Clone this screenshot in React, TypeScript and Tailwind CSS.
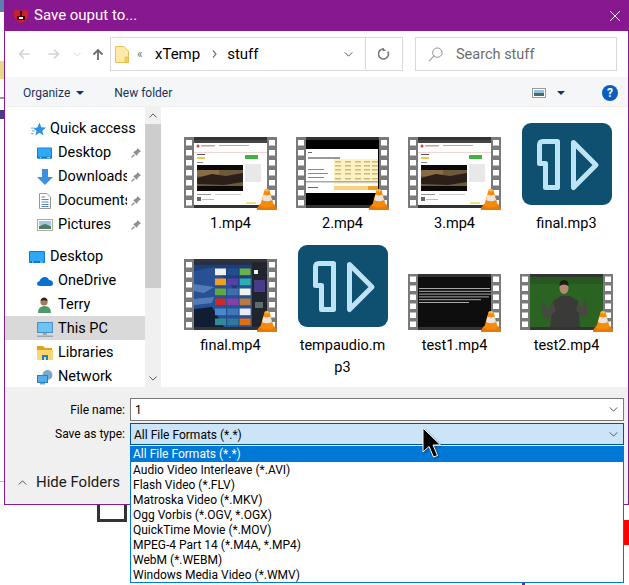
import { ReactNode } from "react";

const listItems = [
  "Audio Video Interleave (*.AVI)",
  "Flash Video (*.FLV)",
  "Matroska Video (*.MKV)",
  "Ogg Vorbis (*.OGV, *.OGX)",
  "QuickTime Movie (*.MOV)",
  "MPEG-4 Part 14 (*.M4A, *.MP4)",
  "WebM (*.WEBM)",
  "Windows Media Video (*.WMV)",
];

function Cone() {
  return (
    <svg viewBox="0 0 20 23" className="absolute right-0 bottom-[-3px] h-[23px] w-[20px]">
      <path d="M0 20 L3 16 H17 L20 20 V22 H0 Z" fill="#e87a00" />
      <path d="M7.5 2 Q10 0 12.5 2 L17 18 Q10 21 3 18 Z" fill="#f58a0b" />
      <path d="M6.5 6.5 Q10 8.5 13.5 6.5 L15 12 Q10 14.5 5 12 Z" fill="#e9e4dc" />
      <path d="M8 1.5 Q10 0.5 12 1.5 L12.5 3 Q10 4 7.5 3 Z" fill="#ffb347" />
    </svg>
  );
}

function WebPage() {
  return (
    <g>
      <rect x="10" y="3" width="73" height="65" fill="#fff" />
      <rect x="10" y="3" width="73" height="3" fill="#444" />
      <circle cx="14" cy="9" r="1.5" fill="#d23b3b" />
      <rect x="17" y="8" width="14" height="1.5" fill="#c9a0a0" />
      <rect x="35" y="8" width="30" height="1" fill="#aaa" />
      <rect x="10" y="15" width="73" height="1" fill="#f2d6d6" />
      <rect x="13" y="17" width="8" height="1" fill="#555" />
      <rect x="13" y="20" width="8" height="2" fill="#f2c744" />
      <rect x="13" y="25" width="6" height="1" fill="#888" />
      <rect x="61" y="18" width="13" height="4" fill="#3fb53f" />
      <rect x="61" y="27" width="16" height="18" fill="#e8e8e8" />
      <rect x="13" y="28" width="46" height="26" fill="#0c0a08" />
      <rect x="13" y="33" width="46" height="16" fill="#6b5a3a" />
      <rect x="13" y="33" width="22" height="6" fill="#8a6a42" />
      <path d="M13 41 L28 37 L42 39 L59 36 V45 L40 48 L13 47 Z" fill="#2a2019" />
      <rect x="13" y="57" width="14" height="1" fill="#999" />
      <rect x="31" y="57" width="26" height="1" fill="#ccc" />
      <rect x="13" y="60" width="4" height="4" fill="#666" />
      <rect x="18" y="62" width="12" height="1" fill="#bbb" />
      <rect x="62" y="65" width="10" height="2" fill="#f2e28a" />
    </g>
  );
}

function TableShot() {
  const cols = [39, 49, 59, 68, 76];
  const rows = [24, 28, 32, 36, 41];
  return (
    <g>
      <rect x="10" y="3" width="73" height="65" fill="#000" />
      <rect x="10" y="12" width="72" height="44" fill="#fff" />
      <rect x="12" y="20" width="32" height="2" fill="#999" />
      <rect x="12" y="15" width="4" height="1" fill="#666" />
      <rect x="38" y="22" width="44" height="25" fill="#fdf2c0" />
      {cols.map((x) => rows.map((y) => <rect key={`${x}-${y}`} x={x} y={y} width="6" height="1.5" fill="#c8b98a" />))}
      <rect x="12" y="32" width="16" height="1" fill="#888" />
      <rect x="12" y="36" width="20" height="1" fill="#888" />
      <rect x="12" y="40" width="16" height="1" fill="#888" />
      <rect x="10" y="44" width="72" height="1.5" fill="#aaa" />
      <rect x="38" y="49" width="44" height="4" fill="#fbd27b" />
      <rect x="72" y="49" width="10" height="4" fill="#f09a22" />
      <rect x="12" y="50" width="10" height="1" fill="#666" />
    </g>
  );
}

function TilesShot() {
  const tiles = [
    ["#f0f0f0", "#1f4f8f", "#6bb04a"],
    ["#f0a020", "#5b3ea8", "#2fb0b0"],
    ["#63a83f", "#3f6fa8", "#f2f2e6"],
    ["#d02828", "#8a3fa8", "#b87a3f"],
    ["#4a88cc", "#3f78b8", "#e8eef2"],
    ["#2f8a9a", "#2f7a9a", "#e07010"],
  ];
  return (
    <g>
      <rect x="10" y="3" width="73" height="65" fill="#1c3f78" />
      <rect x="10" y="3" width="58" height="3" fill="#24304a" />
      <path d="M10 12 L30 8 L50 30 L68 18 V68 H10 Z" fill="#2c5aa0" opacity="0.7" />
      <path d="M10 25 L30 28 L20 34 L10 32 Z M10 40 L30 38 L28 44 L10 46 Z" fill="#6f9ad0" opacity="0.6" />
      <path d="M10 50 L28 48 L40 68 H10 Z" fill="#111d33" />
      <rect x="68" y="3" width="15" height="65" fill="#20242c" />
      <rect x="70" y="21" width="11" height="12" fill="#4a3a8a" />
      <rect x="70" y="11" width="4" height="4" fill="#eee" />
      <rect x="71" y="43" width="8" height="6" fill="#5a6f6a" />
      {tiles.map((row, i) =>
        row.map((c, j) => <rect key={`${i}-${j}`} x={31 + j * 12.3} y={9.5 + i * 10} width="11" height="6.7" fill={c} />),
      )}
    </g>
  );
}

function TextShot() {
  const lines = [71, 72, 72, 70, 62, 50];
  return (
    <g>
      <rect x="10" y="3" width="73" height="50" fill="#0e0e0e" />
      {lines.map((w, i) => (
        <rect key={i} x="11" y={14 + i * 2.8} width={w} height="1" fill="#a8a8a8" />
      ))}
    </g>
  );
}

function PersonShot() {
  return (
    <g>
      <rect x="10" y="3" width="73" height="50" fill="#2b6322" />
      <rect x="10" y="3" width="73" height="7" fill="#1f4f1c" opacity="0.5" />
      <path d="M30 53 L33 27 L41 22 H50 L58 27 L60 53 Z" fill="#3a3a38" />
      <path d="M33 28 L26 38 L25 29 L22 28 L23 42 L28 45 L36 36 Z" fill="#4a4643" />
      <path d="M58 28 L62 36 L63 25 L66 27 L68 40 L62 43 L56 36 Z" fill="#4a4643" />
      <ellipse cx="44" cy="14" rx="4.5" ry="6" fill="#b08a72" />
      <path d="M39.5 12 Q39 6 44 6 Q49 6 48.5 12 Q44 9 39.5 12 Z" fill="#1e1a18" />
    </g>
  );
}

function VideoThumb({ children, short }: { children: ReactNode; short?: boolean }) {
  const h = short ? 56 : 71;
  const holes = short ? [2.5, 11.5, 20.5, 29.5, 38.5, 47.5] : [3, 13, 23, 33, 43, 53, 63];
  return (
    <div className={`relative w-[93px] ${short ? "h-[56px]" : "h-[71px]"}`}>
      <svg viewBox={`0 0 93 ${h}`} className={`w-[93px] ${short ? "h-[56px]" : "h-[71px]"}`}>
        <rect width="93" height={h} fill="#7a7a7a" />
        <rect x="10" width="73" height={h} fill="#333" />
        {holes.map((y) => (
          <g key={y}>
            <rect x="2" y={y} width="6" height="5.5" fill="#fff" />
            <rect x="85" y={y} width="6" height="5.5" fill="#fff" />
          </g>
        ))}
        {children}
      </svg>
      <Cone />
    </div>
  );
}

function AudioThumb() {
  return (
    <svg viewBox="0 0 90 82" className="mb-[3px] ml-px h-[82px] w-[90px]">
      <rect width="90" height="82" rx="9" fill="#0f4f70" />
      <path
        d="M21 18.5 H35.5 V64.5 H23.5 V40.5 H17.5 V22 Q17.5 18.5 21 18.5 Z"
        fill="none"
        stroke="#bee3f4"
        strokeWidth="5"
        strokeLinejoin="round"
      />
      <path d="M51.5 19.5 L74 42 L51.5 64.5 Z" fill="none" stroke="#bee3f4" strokeWidth="5" strokeLinejoin="round" />
    </svg>
  );
}

function FileItem({ name, children }: { name: string; children: ReactNode }) {
  return (
    <div className="flex h-[122px] w-[112px] flex-col items-center">
      <div className="flex h-[93px] shrink-0 items-end justify-center">{children}</div>
      <div className="ml-px w-[92px] pt-[5px] text-center text-[14.5px] leading-[22px] break-all text-black">{name}</div>
    </div>
  );
}

function Pin() {
  return (
    <svg viewBox="0 0 10 10" className="h-[10px] w-[10px]">
      <path d="M6.5 0 L10 3.5 L8.5 4 L6.5 6.5 L6 8 L2 4 L3.5 3.5 L6 1.5 Z" fill="#8f8f8f" />
      <path d="M3.5 6.5 L0.5 9.5" stroke="#8f8f8f" strokeWidth="1.2" />
    </svg>
  );
}

function DesktopIcon({ w = 15 }: { w?: number }) {
  return (
    <svg viewBox="0 0 16 12" width={w} height={12}>
      <rect width="16" height="12" rx="1" fill="#0a78d4" />
      <rect x="1" y="1" width="14" height="9" fill="#30a8f5" />
      <rect x="3" y="10.5" width="1.5" height="1" fill="#bfe3f5" />
      <rect x="11" y="10.5" width="3" height="1" fill="#bfe3f5" />
    </svg>
  );
}

function NavRow({ icon, label, pin, pad = 32, active }: { icon: ReactNode; label: string; pin?: boolean; pad?: number; active?: boolean }) {
  return (
    <div
      className={`flex h-6 items-center pt-[2px] ${active ? "bg-[#d9d9d9]" : ""} ${pad === 24 ? "pl-6" : "pl-8"}`}
    >
      <div className="flex h-4 w-[21px] shrink-0 items-center">{icon}</div>
      <span className={`overflow-hidden text-[14.5px] whitespace-nowrap text-black ${pin ? "w-[69px]" : ""}`}>{label}</span>
      {pin && (
        <span className="ml-[4px] flex">
          <Pin />
        </span>
      )}
    </div>
  );
}

function Chevron({ className }: { className?: string }) {
  return (
    <svg viewBox="0 0 10 6" className={className}>
      <path d="M0.5 0.5 L5 5 L9.5 0.5" fill="none" stroke="#555" strokeWidth="1.2" />
    </svg>
  );
}

function Arrow({ flip, color }: { flip?: boolean; color: string }) {
  return (
    <svg viewBox="0 0 12 12" className={`h-3 w-3 ${flip ? "rotate-180" : ""}`}>
      <path d="M11.5 6 H1.5 M6 1.5 L1.5 6 L6 10.5" fill="none" stroke={color} strokeWidth="1.6" />
    </svg>
  );
}

export default function App() {
  return (
    <div
      className="relative h-[585px] w-[629px] overflow-hidden bg-white"
      style={{ fontFamily: 'Roboto, "Noto Sans", sans-serif' }}
    >
      {/* scraps of the windows behind the dialog */}
      <div className="absolute top-0 left-0 h-[12px] w-[4px] bg-[#5a7fb0]" />
      <div className="absolute top-[61px] left-0 h-[18px] w-[4px] bg-[#e8d88a]" />
      <div className="absolute top-[97px] left-0 h-[2px] w-[4px] bg-[#9a9a9a]" />
      <div className="absolute top-[110px] left-0 h-[9px] w-[4px] bg-[#4a3a90]" />
      <div className="absolute top-[481px] left-0 h-[1px] w-[4px] bg-[#bbb]" />
      <div className="absolute top-[504px] left-[97px] h-[18px] w-[30px] border-x-[3px] border-b-[3px] border-[#333]" />
      <div className="absolute top-[520px] left-[624px] h-[25px] w-[5px] bg-[#f00]" />
      <div className="absolute top-[581px] left-[522px] h-[4px] w-[3px] bg-[#8a1a90]" />

      <div className="relative ml-[4px] flex h-[505px] w-[625px] flex-col border-x border-b border-[#8a1a90] bg-white">
        {/* title bar */}
        <div className="-mx-px flex h-[31px] shrink-0 items-center bg-[#881890] pr-[9px] pl-[9px] text-white">
          <svg viewBox="0 0 16 16" className="h-4 w-4 shrink-0">
            <path d="M1 3 Q4 1 8 3 Q12 1 15 3 V9 Q12 14 8 15 Q4 14 1 9 Z" fill="#c9202a" />
            <path d="M7 3 H9 V8 H12 V12 H4 V8 H7 Z" fill="#3a0a10" />
            <rect x="6" y="9" width="4" height="2" fill="#eee" />
          </svg>
          <span className="ml-[5px] text-[15px]">Save ouput to...</span>
          <svg viewBox="0 0 10 10" className="ml-auto h-[10px] w-[10px]">
            <path d="M0 0 L10 10 M10 0 L0 10" stroke="#fff" strokeWidth="1" />
          </svg>
        </div>

        {/* address bar */}
        <div className="flex h-[46px] shrink-0 items-center">
          <div className="ml-[13px] flex w-[93px] items-center">
            <Arrow color="#d4d4d4" />
            <span className="ml-[18px]">
              <Arrow flip color="#d4d4d4" />
            </span>
            <Chevron className="ml-[14px] h-[5px] w-[7px] opacity-30" />
            <svg viewBox="0 0 12 12" className="ml-[11px] h-3 w-3">
              <path d="M6 12 V2 M1.5 6.5 L6 2 L10.5 6.5" fill="none" stroke="#6d6d6d" strokeWidth="1.8" />
            </svg>
          </div>
          <div className="ml-[-1px] flex h-[34px] w-[293px] items-center border border-[#d9d9d9] pl-[4px]">
            <svg viewBox="0 0 14 17" className="h-[17px] w-[14px] shrink-0">
              <path d="M0.5 0.5 H9 L13.5 5 V16.5 H0.5 Z" fill="#fde9a8" stroke="#e6c35c" />
              <rect x="10" y="11" width="3.5" height="5.5" fill="#f6cf58" stroke="#d8b045" strokeWidth="0.5" />
            </svg>
            <span className="ml-[8px] w-[10px] text-[12px] leading-none text-[#777]">«</span>
            <span className="ml-[8px] text-[15px] text-black">xTemp</span>
            <svg viewBox="0 0 5 8" className="ml-[12px] h-[8px] w-[5px]">
              <path d="M1 0.5 L4 4 L1 7.5" fill="none" stroke="#777" strokeWidth="1.2" />
            </svg>
            <span className="ml-[10px] text-[15px] text-black">stuff</span>
            <Chevron className="mr-[12px] ml-auto h-[5px] w-[9px]" />
            <div className="flex h-full w-[37px] items-center justify-center border-l border-[#d9d9d9]">
              <svg viewBox="0 0 12 12" className="h-[12px] w-[12px]">
                <path d="M9.8 3.5 A5 5 0 1 1 6 1" fill="none" stroke="#777" strokeWidth="1.6" />
                <path d="M4.5 0 V3.5 H8 Z" fill="#777" transform="translate(0 -0.5)" />
              </svg>
            </div>
          </div>
          <div className="ml-[12px] flex h-[34px] w-[202px] items-center border border-[#d9d9d9] pl-[12px]">
            <svg viewBox="0 0 16 16" className="h-[15px] w-[15px]">
              <circle cx="10" cy="6" r="5" fill="none" stroke="#8a8a8a" strokeWidth="1" />
              <path d="M6.5 9.5 L1 15" stroke="#b59a6a" strokeWidth="1.2" />
            </svg>
            <span className="ml-[13px] pt-[2px] text-[14.5px] text-[#6d6d6d]">Search stuff</span>
          </div>
        </div>

        {/* toolbar */}
        <div className="flex h-[30px] shrink-0 items-center border-b border-[#f0f0f0] bg-[#f5f6f7] pt-[2px] pl-[18px] text-[12px] text-[#1a3358]">
          <span>Organize</span>
          <span className="ml-[6px] h-0 w-0 border-x-[4px] border-t-[4px] border-x-transparent border-t-[#1a3358]" />
          <span className="ml-[30px]">New folder</span>
          <svg viewBox="0 0 14 10" className="ml-auto h-[10px] w-[14px]">
            <rect x="0.5" y="0.5" width="13" height="9" fill="#fff" stroke="#999" />
            <rect x="2" y="2" width="10" height="3" fill="#8fc0e8" />
            <rect x="2" y="5" width="10" height="3" fill="#4d6b5a" />
          </svg>
          <span className="ml-[11px] h-0 w-0 border-x-[4px] border-t-[4px] border-x-transparent border-t-[#1a3358]" />
          <span className="mr-[10px] ml-[37px] flex h-4 w-4 items-center justify-center rounded-full bg-[#0a5ebd] text-[12px] font-bold text-white">
            ?
          </span>
        </div>

        {/* main */}
        <div className="flex min-h-0 flex-1">
          <div className="w-[140px] shrink-0 overflow-hidden pt-[9px]">
            <NavRow
              pad={24}
              label="Quick access"
              icon={
                <svg viewBox="0 0 16 14" className="ml-[2px] h-[14px] w-[15px]">
                  <path d="M9 0 L11 5 L16 5.5 L12 9 L13.5 14 L9 11 L4.5 14 L6 9 L3 6.5 L7 5 Z" fill="#2f8fe0" />
                  <path d="M0 6 H4 M1 9 H4 M0 12 H3" stroke="#2f8fe0" strokeWidth="0.8" />
                </svg>
              }
            />
            <NavRow pin label="Desktop" icon={<DesktopIcon />} />
            <NavRow
              pin
              label="Downloads"
              icon={
                <svg viewBox="0 0 16 16" className="h-4 w-4">
                  <path d="M5 0 H11 V8 H16 L8 16 L0 8 H5 Z" fill="#3d8fe0" />
                </svg>
              }
            />
            <NavRow
              pin
              label="Documents"
              icon={
                <svg viewBox="0 0 12 16" className="ml-[2px] h-4 w-3">
                  <path d="M0.5 0.5 H8 L11.5 4 V15.5 H0.5 Z" fill="#fff" stroke="#999" />
                  <path d="M2.5 4 H6 M2.5 6.5 H9.5 M2.5 9 H9.5 M2.5 11.5 H9.5 M2.5 13.5 H9.5" stroke="#5a88b8" />
                </svg>
              }
            />
            <NavRow
              pin
              label="Pictures"
              icon={
                <svg viewBox="0 0 16 12" className="h-3 w-4">
                  <rect x="0.5" y="0.5" width="15" height="11" fill="#fff" stroke="#aaa" />
                  <rect x="2" y="2" width="12" height="4" fill="#9cc8ee" />
                  <path d="M2 7 L8 5 L14 7 V10 H2 Z" fill="#4f7a60" />
                </svg>
              }
            />
            <div className="h-2" />
            <NavRow pad={24} label="Desktop" icon={<DesktopIcon w={16} />} />
            <NavRow
              label="OneDrive"
              icon={
                <svg viewBox="0 0 16 10" className="h-[10px] w-4">
                  <path d="M3 10 Q0 10 0 7.5 Q0 5.5 2.5 5 Q4 1 8 1 Q11 1 12 4 Q16 4 16 7.5 Q16 10 13 10 Z" fill="#0a6fcf" />
                </svg>
              }
            />
            <NavRow
              label="Terry"
              icon={
                <svg viewBox="0 0 13 16" className="ml-[1px] h-4 w-[13px]">
                  <path d="M0 16 Q0 9 6.5 9 Q13 9 13 16 Z" fill="#4f9a6a" />
                  <circle cx="6" cy="5" r="3.6" fill="#a87a5a" />
                  <path d="M2.5 4 Q3 0.5 6.5 0.5 Q9.5 1 9.5 4 Q6 2.5 2.5 4 Z" fill="#2a2320" />
                </svg>
              }
            />
            <NavRow
              active
              label="This PC"
              icon={
                <svg viewBox="0 0 16 15" className="h-[15px] w-4">
                  <rect x="0.5" y="0.5" width="15" height="10" fill="#6ec3f0" stroke="#4a90c8" />
                  <rect x="6" y="11" width="4" height="2" fill="#9aa8b5" />
                  <rect x="0" y="13.5" width="16" height="1.5" fill="#9aa8b5" />
                </svg>
              }
            />
            <NavRow
              label="Libraries"
              icon={
                <svg viewBox="0 0 16 14" className="h-[14px] w-4">
                  <path d="M0 0 H6 L8 2 H15 V5 H0 Z" fill="#e0a020" />
                  <rect y="4" width="16" height="10" fill="#fbd774" />
                  <path d="M5 14 V9 H11 V14 H9 V11 H7 V14 Z" fill="#1f7fd0" />
                </svg>
              }
            />
            <NavRow
              label="Network"
              icon={
                <svg viewBox="0 0 16 15" className="h-[15px] w-4">
                  <circle cx="10.5" cy="5" r="5" fill="#7aa8c8" />
                  <rect x="0.5" y="5.5" width="10" height="7" fill="#52aef0" stroke="#2a80c0" />
                  <rect x="3" y="13" width="5" height="1.5" fill="#8aa0b0" />
                </svg>
              }
            />
          </div>

          {/* scrollbar */}
          <div className="flex w-[16px] shrink-0 flex-col items-center bg-[#f0f0f0]">
            <div className="flex h-[17px] items-center">
              <Chevron className="h-[5px] w-[8px] rotate-180" />
            </div>
            <div className="h-[164px] w-full bg-[#cdcdcd]" />
            <div className="mt-auto flex h-[17px] items-center">
              <Chevron className="h-[5px] w-[8px]" />
            </div>
          </div>

          {/* files */}
          <div className="flex min-w-0 flex-1 flex-wrap content-start pt-[8px] pl-[13px]">
            <FileItem name="1.mp4">
              <VideoThumb>
                <WebPage />
              </VideoThumb>
            </FileItem>
            <FileItem name="2.mp4">
              <VideoThumb>
                <TableShot />
              </VideoThumb>
            </FileItem>
            <FileItem name="3.mp4">
              <VideoThumb>
                <WebPage />
              </VideoThumb>
            </FileItem>
            <FileItem name="final.mp3">
              <AudioThumb />
            </FileItem>
            <FileItem name="final.mp4">
              <VideoThumb>
                <TilesShot />
              </VideoThumb>
            </FileItem>
            <FileItem name="tempaudio.mp3">
              <AudioThumb />
            </FileItem>
            <FileItem name="test1.mp4">
              <VideoThumb short>
                <TextShot />
              </VideoThumb>
            </FileItem>
            <FileItem name="test2.mp4">
              <VideoThumb short>
                <PersonShot />
              </VideoThumb>
            </FileItem>
          </div>
        </div>

        {/* bottom panel */}
        <div className="relative h-[117px] shrink-0 bg-[#f0f0f0] text-[12px] text-black">
          <div className="flex items-center pt-[11px]">
            <span className="w-[120px] text-right">File name:</span>
            <div className="ml-[5px] flex h-[23px] w-[494px] items-center border border-[#7a7a7a] bg-white px-[4px]">
              1
              <Chevron className="mr-[1px] ml-auto h-[5px] w-[9px]" />
            </div>
          </div>
          <div className="mt-[2px] flex items-center">
            <span className="w-[120px] text-right">Save as type:</span>
            <div className="ml-[5px] flex h-[22px] w-[494px] items-center border border-[#005499] bg-[#cce4f7] px-[3px] pt-px">
              All File Formats (*.*)
              <Chevron className="mr-[2px] ml-auto h-[5px] w-[9px]" />
            </div>
          </div>
          <div className="mt-[26px] flex items-center pl-[13px]">
            <Chevron className="h-[5px] w-[9px] rotate-180" />
            <span className="ml-[9px] text-[15px] text-[#1a1a1a]">Hide Folders</span>
          </div>
        </div>
      </div>

      {/* open dropdown */}
      <div className="absolute top-[446px] left-[130px] h-[137px] w-[494px] border-x border-b border-[#0078d7] bg-white text-[12px] text-black">
        <div className="flex h-[16px] items-center bg-[#0078d7] pl-[2px] text-white">All File Formats (*.*)</div>
        {listItems.map((item) => (
          <div key={item} className="flex h-[15px] items-center pl-[2px]">
            {item}
          </div>
        ))}
      </div>

      {/* mouse cursor */}
      <svg viewBox="0 0 20 32" className="absolute top-[427px] left-[422px] h-[32px] w-[20px] drop-shadow-[1px_1px_1px_rgba(0,0,0,0.35)]">
        <path d="M1 1 V25 L7 19.5 L11.5 30 L15.5 28.5 L11 18 H18.5 Z" fill="#000" stroke="#fff" strokeWidth="1" />
      </svg>
    </div>
  );
}
